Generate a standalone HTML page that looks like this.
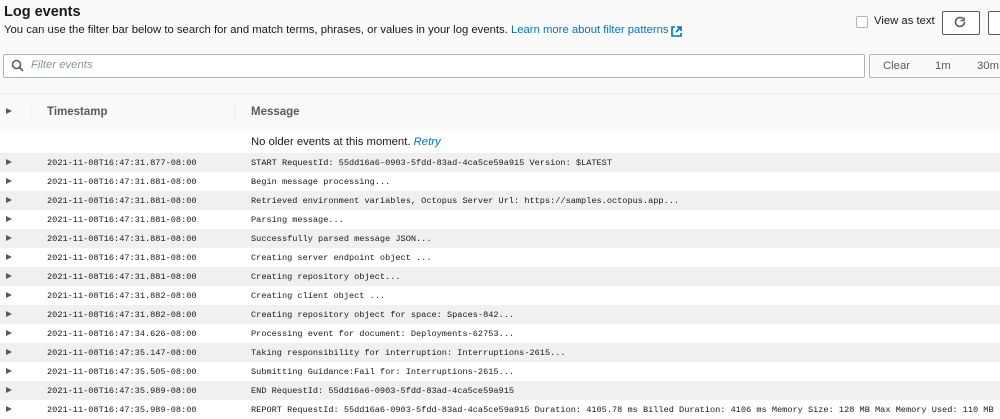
<!DOCTYPE html><html><head><style>
body{margin:0;width:1000px;height:419px;overflow:hidden;background:#fafafa;font-family:"Liberation Sans",sans-serif;position:relative}
.a{position:absolute;white-space:nowrap}
.row{position:absolute;left:0;width:1000px;height:19px;font-family:"Liberation Mono",monospace;font-size:8.6px;color:#16191f}
.row.g{background:#f0f0f0}
.row span{position:absolute;top:5px}
.tri{position:absolute;left:6px;top:6px;width:0;height:0;border-left:6px solid #545b64;border-top:3.5px solid transparent;border-bottom:3.5px solid transparent}
</style></head><body>
<div class="a" style="left:4px;top:4px;font-size:14.5px;font-weight:bold;color:#16191f">Log events</div>
<div class="a" style="left:4px;top:24px;font-size:11.3px;color:#16191f">You can use the filter bar below to search for and match terms, phrases, or values in your log events. <span style="color:#0073bb">Learn more about filter patterns</span></div>
<svg class="a" style="left:671px;top:26px" width="11" height="11" viewBox="0 0 11 11"><path d="M4 1H1v9h9V7" fill="none" stroke="#0073bb" stroke-width="1.6"/><path d="M6 1h4v4M10 1L5 6" fill="none" stroke="#0073bb" stroke-width="1.6"/></svg>
<div class="a" style="left:856px;top:16px;width:10px;height:10px;border:1px solid #aab7b8;background:#fff;border-radius:2px"></div>
<div class="a" style="left:874px;top:15px;font-size:11.3px;color:#16191f">View as text</div>
<div class="a" style="left:942px;top:11px;width:36px;height:22px;border:1px solid #545b64;border-radius:2px;background:#fff"></div>
<svg class="a" style="left:953px;top:15px" width="14" height="14" viewBox="0 0 14 14"><path d="M11.5 7A4.5 4.5 0 1 1 10 3.6" fill="none" stroke="#545b64" stroke-width="1.6"/><path d="M7.5 2.5h3.5v-3" fill="none" stroke="#545b64" stroke-width="1.6" transform="translate(0,3)"/></svg>
<div class="a" style="left:988px;top:11px;width:20px;height:22px;border:1px solid #545b64;border-radius:2px;background:#fff"></div>
<div class="a" style="left:3px;top:54px;width:860px;height:22px;border:1px solid #aab7b8;border-radius:2px;background:#fff"></div>
<svg class="a" style="left:11px;top:59px" width="13" height="13" viewBox="0 0 13 13"><circle cx="5.5" cy="5.5" r="4" fill="none" stroke="#545b64" stroke-width="1.6"/><path d="M8.5 8.5L12 12" stroke="#545b64" stroke-width="1.6"/></svg>
<div class="a" style="left:31px;top:59px;font-size:11.3px;font-style:italic;color:#879596">Filter events</div>
<div class="a" style="left:869px;top:54px;width:140px;height:22px;border:1px solid #aab7b8;border-radius:2px;background:#fafafa"></div>
<div class="a" style="left:883px;top:60px;font-size:11.3px;color:#545b64">Clear</div>
<div class="a" style="left:935px;top:60px;font-size:11.3px;color:#545b64">1m</div>
<div class="a" style="left:977px;top:60px;font-size:11.3px;color:#545b64">30m</div>
<div class="a" style="left:0;top:93px;width:1000px;height:1px;background:#eaeded"></div>
<div class="a" style="left:0;top:94px;width:1000px;height:37px;background:#fafafa"></div>
<div class="tri" style="top:108px"></div>
<div class="a" style="left:30px;top:104px;width:1px;height:18px;background:#eaeded"></div>
<div class="a" style="left:234px;top:104px;width:1px;height:18px;background:#eaeded"></div>
<div class="a" style="left:47px;top:106px;font-size:11.5px;font-weight:bold;color:#545b64">Timestamp</div>
<div class="a" style="left:251px;top:106px;font-size:11.5px;font-weight:bold;color:#545b64">Message</div>
<div class="a" style="left:0;top:131px;width:1000px;height:22px;background:#fff"></div>
<div class="a" style="left:251px;top:136px;font-size:11.3px;color:#16191f">No older events at this moment. <i style="color:#0073bb">Retry</i></div>
<div class="row g" style="top:153px"><i class="tri"></i><span style="left:47px">2021-11-08T16:47:31.877-08:00</span><span style="left:251px">START RequestId: 55dd16a6-0903-5fdd-83ad-4ca5ce59a915 Version: $LATEST</span></div>
<div class="row" style="top:172px;background:#fff"><i class="tri"></i><span style="left:47px">2021-11-08T16:47:31.881-08:00</span><span style="left:251px">Begin message processing...</span></div>
<div class="row g" style="top:191px"><i class="tri"></i><span style="left:47px">2021-11-08T16:47:31.881-08:00</span><span style="left:251px">Retrieved environment variables, Octopus Server Url: https://samples.octopus.app...</span></div>
<div class="row" style="top:210px;background:#fff"><i class="tri"></i><span style="left:47px">2021-11-08T16:47:31.881-08:00</span><span style="left:251px">Parsing message...</span></div>
<div class="row g" style="top:229px"><i class="tri"></i><span style="left:47px">2021-11-08T16:47:31.881-08:00</span><span style="left:251px">Successfully parsed message JSON...</span></div>
<div class="row" style="top:248px;background:#fff"><i class="tri"></i><span style="left:47px">2021-11-08T16:47:31.881-08:00</span><span style="left:251px">Creating server endpoint object ...</span></div>
<div class="row g" style="top:267px"><i class="tri"></i><span style="left:47px">2021-11-08T16:47:31.881-08:00</span><span style="left:251px">Creating repository object...</span></div>
<div class="row" style="top:286px;background:#fff"><i class="tri"></i><span style="left:47px">2021-11-08T16:47:31.882-08:00</span><span style="left:251px">Creating client object ...</span></div>
<div class="row g" style="top:305px"><i class="tri"></i><span style="left:47px">2021-11-08T16:47:31.882-08:00</span><span style="left:251px">Creating repository object for space: Spaces-842...</span></div>
<div class="row" style="top:324px;background:#fff"><i class="tri"></i><span style="left:47px">2021-11-08T16:47:34.626-08:00</span><span style="left:251px">Processing event for document: Deployments-62753...</span></div>
<div class="row g" style="top:343px"><i class="tri"></i><span style="left:47px">2021-11-08T16:47:35.147-08:00</span><span style="left:251px">Taking responsibility for interruption: Interruptions-2615...</span></div>
<div class="row" style="top:362px;background:#fff"><i class="tri"></i><span style="left:47px">2021-11-08T16:47:35.505-08:00</span><span style="left:251px">Submitting Guidance:Fail for: Interruptions-2615...</span></div>
<div class="row g" style="top:381px"><i class="tri"></i><span style="left:47px">2021-11-08T16:47:35.989-08:00</span><span style="left:251px">END RequestId: 55dd16a6-0903-5fdd-83ad-4ca5ce59a915</span></div>
<div class="row" style="top:400px;background:#fff"><i class="tri"></i><span style="left:47px">2021-11-08T16:47:35.989-08:00</span><span style="left:251px">REPORT RequestId: 55dd16a6-0903-5fdd-83ad-4ca5ce59a915 Duration: 4105.78 ms Billed Duration: 4106 ms Memory Size: 128 MB Max Memory Used: 110 MB</span></div>
</body></html>
